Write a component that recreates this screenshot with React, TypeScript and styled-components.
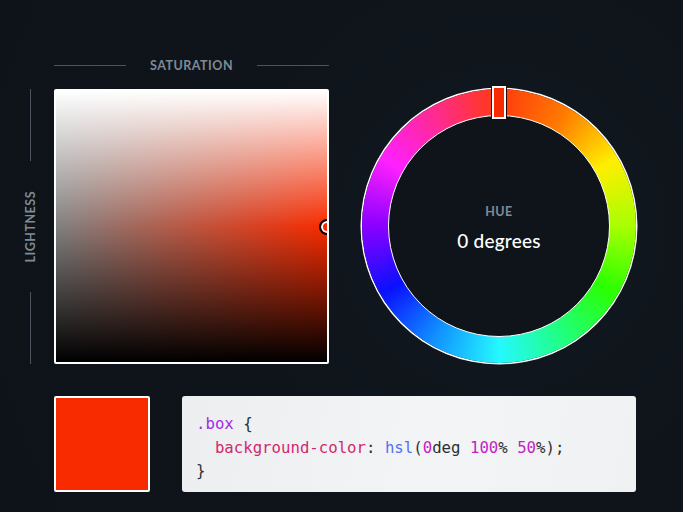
import styled, { createGlobalStyle } from 'styled-components';

const GlobalStyles = createGlobalStyle`
  * {
    box-sizing: border-box;
  }

  body {
    margin: 0;
    background-color: #0f141b;
    font-family: Lato, 'Noto Sans', sans-serif;
  }
`;

// the screenshot renders pure red a little toward orange
const SHOWN_RED = '#f82b00';

const Page = styled.main`
  width: 683px;
  height: 512px;
  padding: 55px 0 0 18px;
  background: radial-gradient(circle at 500px 230px, #131920 0%, #0f141b 45%, #0e1319 100%);
  overflow: hidden;
`;

const TopRow = styled.section`
  display: flex;
  align-items: flex-start;
  gap: 33px;
`;

const PickerGrid = styled.div`
  display: grid;
  grid-template-columns: 24px 275px;
  grid-template-rows: 20px 275px;
  column-gap: 12px;
  row-gap: 14px;
`;

const AxisLabel = styled.span`
  color: #7f8a96;
  font-size: 12.5px;
  font-weight: 700;
  letter-spacing: 0.5px;
  text-transform: uppercase;
  white-space: nowrap;
`;

const SatHeader = styled.div`
  grid-column: 2;
  display: flex;
  align-items: center;
  gap: 24px;
`;

const HLine = styled.div`
  flex: 1;
  height: 1px;
  background-color: #4a535e;
`;

const LightAxis = styled.div`
  grid-column: 1;
  grid-row: 2;
  display: flex;
  flex-direction: column;
  align-items: center;
  gap: 30px;
`;

const VLine = styled.div`
  flex: 1;
  width: 1px;
  background-color: #4a535e;
`;

const VerticalLabel = styled(AxisLabel)`
  writing-mode: vertical-rl;
  transform: rotate(180deg);
`;

const SLSquare = styled.div<{ $color: string }>`
  grid-column: 2;
  grid-row: 2;
  position: relative;
  overflow: hidden;
  border: 2px solid #ffffff;
  border-radius: 2px;
  background:
    linear-gradient(to bottom, #fff 0%, rgba(255, 255, 255, 0) 50%, rgba(0, 0, 0, 0) 50%, #000 100%),
    linear-gradient(to right, #808080, ${(p) => p.$color});
`;

const SLHandle = styled.div<{ $color: string }>`
  position: absolute;
  width: 16px;
  height: 16px;
  border-radius: 50%;
  border: 2px solid #000;
  background-color: ${(p) => p.$color};
  box-shadow: inset 0 0 0 2px #fff;
  transform: translate(-50%, -50%);
`;

const Wheel = styled.div`
  position: relative;
  margin-top: 34px;
  width: 274px;
  height: 274px;
  border-radius: 50%;
  background: conic-gradient(
    #ff3a10,
    #ff7a00 30deg,
    #ffee00 60deg,
    #a8ff00 90deg,
    #2aff00 120deg,
    #20ff80 150deg,
    #25f8ff 180deg,
    #1090ff 210deg,
    #0a10ff 240deg,
    #8a00ff 270deg,
    #ff20ff 300deg,
    #ff2a90 330deg,
    #ff3a10 360deg
  );
  box-shadow: 0 0 0 1.5px #ffffff;
  display: flex;
  align-items: center;
  justify-content: center;
`;

const WheelCenter = styled.div`
  width: 222px;
  height: 222px;
  border-radius: 50%;
  background-color: #0f141b;
  border: 1.5px solid #ffffff;
  display: flex;
  flex-direction: column;
  align-items: center;
  justify-content: center;
  gap: 10px;
  padding-top: 3px;
`;

const HueValue = styled.div`
  color: #ffffff;
  font-size: 19px;
  font-weight: 500;
  letter-spacing: 0.2px;
`;

const HueHandle = styled.div<{ $color: string }>`
  position: absolute;
  top: -3px;
  left: 50%;
  width: 14px;
  height: 33px;
  transform: translateX(-50%);
  background-color: ${(p) => p.$color};
  border: 2px solid #ffffff;
  box-shadow: 0 0 0 1px #2a0606;
`;

const BottomRow = styled.section`
  display: flex;
  gap: 32px;
  margin: 32px 0 0 36px;
`;

const Swatch = styled.div<{ $color: string }>`
  width: 96px;
  height: 96px;
  border: 2px solid #ffffff;
  border-radius: 2px;
  background-color: ${(p) => p.$color};
`;

const CodeBox = styled.pre`
  margin: 0;
  width: 454px;
  height: 96px;
  padding: 16px 14px;
  border-radius: 3px;
  background: linear-gradient(100deg, #eceef0 0%, #f3f4f5 55%, #f0f1f3 100%);
  color: #2f3034;
  font-family: 'DejaVu Sans Mono', 'Liberation Mono', monospace;
  font-size: 15.7px;
  line-height: 23.5px;
`;

const Tok = styled.span<{ $kind: 'sel' | 'prop' | 'fn' | 'num' }>`
  color: ${(p) =>
    ({ sel: '#a62ae6', prop: '#d4286e', fn: '#4f72f2', num: '#c41fc6' })[p.$kind]};
`;

export default function App() {
  const hue = 0;

  return (
    <>
      <GlobalStyles />

      <Page>
        <TopRow>
          <PickerGrid>
            <SatHeader>
              <HLine />
              <AxisLabel>Saturation</AxisLabel>
              <HLine />
            </SatHeader>

            <LightAxis>
              <VLine />
              <VerticalLabel>Lightness</VerticalLabel>
              <VLine />
            </LightAxis>

            <SLSquare $color={SHOWN_RED}>
              <SLHandle $color={SHOWN_RED} style={{ left: '100%', top: '50%' }} />
            </SLSquare>
          </PickerGrid>

          <Wheel>
            <HueHandle $color={SHOWN_RED} />
            <WheelCenter>
              <AxisLabel>Hue</AxisLabel>
              <HueValue>{hue} degrees</HueValue>
            </WheelCenter>
          </Wheel>
        </TopRow>

        <BottomRow>
          <Swatch $color={SHOWN_RED} />
          <CodeBox>
            <Tok $kind="sel">.box</Tok> {'{'}
            {'\n  '}
            <Tok $kind="prop">background-color</Tok>: <Tok $kind="fn">hsl</Tok>(
            <Tok $kind="num">{hue}</Tok>deg <Tok $kind="num">100</Tok>% <Tok $kind="num">50</Tok>%);
            {'\n}'}
          </CodeBox>
        </BottomRow>
      </Page>
    </>
  );
}
